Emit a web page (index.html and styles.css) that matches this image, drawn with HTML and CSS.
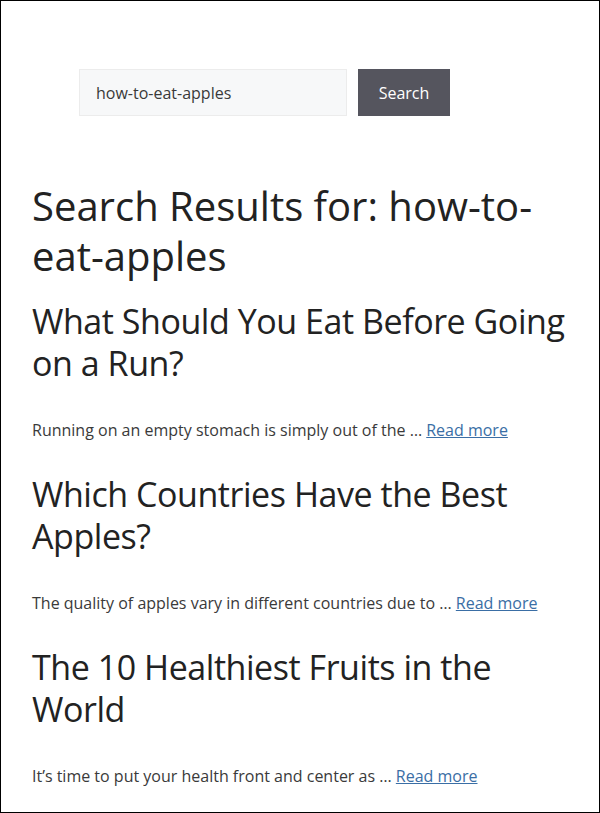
FILE: index.html
```html
<!DOCTYPE html>
<html lang="en">
<head>
<meta charset="utf-8">
<title>Search Results for: how-to-eat-apples</title>
<link rel="stylesheet" href="styles.css">
</head>
<body>
<div class="page">
  <form class="search-form">
    <input class="search-field" type="search" value="how-to-eat-apples">
    <button class="search-submit" type="button">Search</button>
  </form>
  <h1 class="page-title">Search Results for: how-to-eat-apples</h1>
  <article class="result">
    <h2 class="entry-title"><a href="#">What Should You Eat Before Going on a Run?</a></h2>
    <p class="summary">Running on an empty stomach is simply out of the … <a class="read-more" href="#">Read more</a></p>
  </article>
  <article class="result">
    <h2 class="entry-title"><a href="#">Which Countries Have the Best Apples?</a></h2>
    <p class="summary">The quality of apples vary in different countries due to … <a class="read-more" href="#">Read more</a></p>
  </article>
  <article class="result">
    <h2 class="entry-title"><a href="#">The 10 Healthiest Fruits in the World</a></h2>
    <p class="summary">It’s time to put your health front and center as … <a class="read-more" href="#">Read more</a></p>
  </article>
</div>
</body>
</html>
```
FILE: styles.css
```css
html, body {
  margin: 0;
  padding: 0;
  background: #ffffff;
}
body {
  font-family: "Open Sans", "Noto Sans", sans-serif;
  color: #3a3a3a;
}
.page {
  box-sizing: border-box;
  min-height: 813px;
  border: 1px solid #000;
  padding: 68px 30px 0 31px;
}
.search-form {
  display: flex;
  gap: 11px;
  margin: 0 0 0 47px;
}
.search-field {
  box-sizing: border-box;
  width: 268px;
  height: 47px;
  margin: 0;
  padding: 0 16px;
  border: 1px solid #ececec;
  background: #f7f8f9;
  font-family: "Open Sans", "Noto Sans", sans-serif;
  font-size: 16px;
  color: #3a3a3a;
  outline: none;
}
.search-submit {
  box-sizing: border-box;
  width: 92px;
  height: 47px;
  margin: 0;
  padding: 0;
  border: 0;
  background: #55555e;
  color: #ffffff;
  font-family: "Open Sans", "Noto Sans", sans-serif;
  font-size: 16px;
}
.page-title {
  margin: 65px 0 0 0;
  font-size: 40px;
  line-height: 50px;
  font-weight: 400;
  color: #222222;
}
.result {
  display: flex;
  flex-direction: column;
}
.entry-title {
  margin: 30px 0 0 0;
  font-size: 34px;
  line-height: 42px;
  letter-spacing: -0.45px;
  font-weight: 400;
  color: #222222;
}
.page-title + .result .entry-title {
  margin-top: 19px;
}
.entry-title a {
  color: inherit;
  text-decoration: none;
}
.summary {
  margin: 34px 0 0 0;
  font-size: 16px;
  line-height: 25px;
  color: #3a3a3a;
}
.read-more {
  color: #3a6ea5;
  text-decoration: underline;
}
```
